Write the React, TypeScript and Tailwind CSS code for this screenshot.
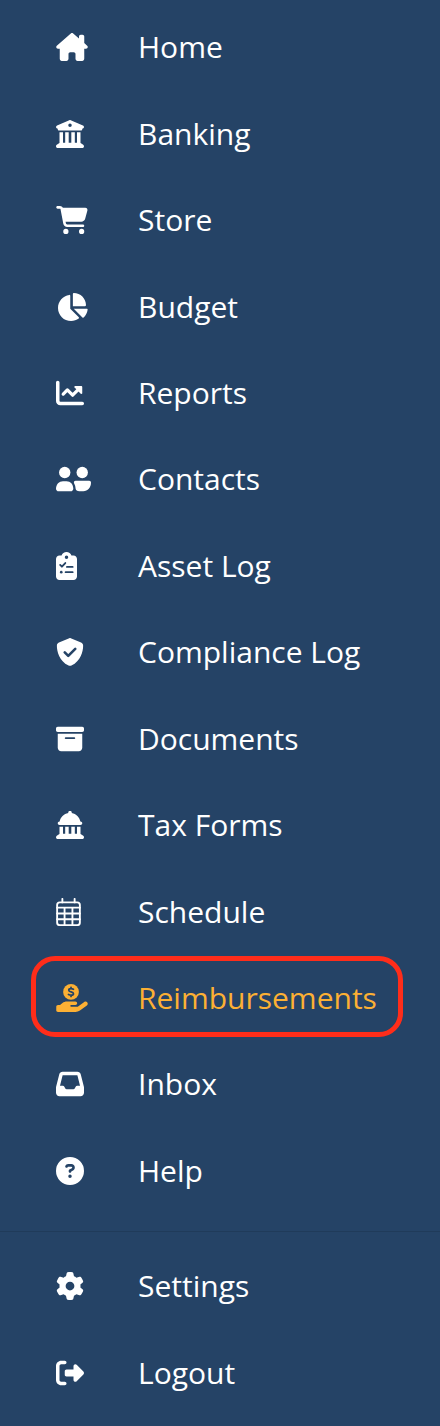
import type { ComponentType } from 'react'
import {
  FaBoxArchive,
  FaBuildingColumns,
  FaCartShopping,
  FaChartPie,
  FaCircleQuestion,
  FaGear,
  FaHouseChimney,
  FaInbox,
  FaLandmarkDome,
  FaRightFromBracket,
} from 'react-icons/fa6'

type IconType = ComponentType<{ className?: string }>

interface NavItem {
  label: string
  icon: IconType
  // icons are 28px tall, their width depends on the glyph
  iconSize?: string
  active?: boolean
}

const ChartLineUp: IconType = ({ className }) => (
  <svg viewBox="0 0 512 512" className={className} fill="currentColor">
    <path d="M64 64c0-17.7-14.3-32-32-32S0 46.3 0 64V400c0 44.2 35.8 80 80 80H480c17.7 0 32-14.3 32-32s-14.3-32-32-32H80c-8.8 0-16-7.2-16-16V64z" />
    <path d="M132 276l76-76 96 96 120-120" fill="none" stroke="currentColor" strokeWidth="60" strokeLinecap="round" strokeLinejoin="round" />
    <path d="M352 128H460c11 0 20 9 20 20V256c0 16-18 22-28 12L340 156c-10-10-4-28 12-28z" />
  </svg>
)

const UserPair: IconType = ({ className }) => (
  <svg viewBox="0 0 640 512" className={className} fill="currentColor">
    <circle cx="160" cy="136" r="104" />
    <circle cx="480" cy="136" r="104" />
    <path d="M0 432C0 354 56 296 128 296h64c72 0 124 58 124 136 0 27-21 48-48 48H48c-27 0-48-21-48-48z" />
    <path d="M358 288H608c18 0 32 14 32 32 0 96-60 160-140 160H428c-44 0-64-18-70-50-2-38-10-66-26-94-14-24 2-48 26-48z" />
  </svg>
)

const ClipboardCheck: IconType = ({ className }) => (
  <svg viewBox="0 0 384 512" className={className} fill="currentColor">
    <path
      fillRule="evenodd"
      d="M192 0c-41.8 0-77.4 26.7-90.5 64H64C28.7 64 0 92.7 0 128V448c0 35.3 28.7 64 64 64H320c35.3 0 64-28.7 64-64V128c0-35.3-28.7-64-64-64H282.5C269.4 26.7 233.8 0 192 0zm0 64a32 32 0 1 1 0 64 32 32 0 1 1 0-64z"
    />
    <g className="stroke-[#254366]" fill="none" strokeWidth="34" strokeLinecap="round" strokeLinejoin="round">
      <path d="M76 236l32 32 62-66M200 272H304M176 368H304" />
      <path d="M96 368h.1" strokeWidth="48" />
    </g>
  </svg>
)

const ShieldCheck: IconType = ({ className }) => (
  <svg viewBox="0 0 512 512" className={className} fill="currentColor">
    <path d="M256 0c4.6 0 9.2 1 13.4 2.9L457.7 82.8c22 9.3 38.4 31 38.3 57.2-.5 99.2-41.3 280.7-213.6 363.2-16.7 8-36.1 8-52.8 0C57.3 420.7 16.5 239.2 16 140c-.1-26.2 16.3-47.9 38.3-57.2L242.7 2.9C246.8 1 251.4 0 256 0z" />
    <path d="M160 264l64 64 128-128" className="stroke-[#254366]" fill="none" strokeWidth="48" strokeLinecap="round" strokeLinejoin="round" />
  </svg>
)

const CalendarGrid: IconType = ({ className }) => (
  <svg viewBox="0 0 448 512" className={className} fill="none" stroke="currentColor" strokeWidth="34" strokeLinecap="round">
    <rect x="16" y="80" width="416" height="416" rx="48" />
    <path d="M112 16V80M336 16V80M16 176H432M16 284H432M16 388H432M152 176V496M296 176V496" />
  </svg>
)

const HandHoldingCoin: IconType = ({ className }) => (
  <svg viewBox="0 0 576 512" className={className} fill="currentColor">
    <path d="M559.7 392.2c17.8-13.1 21.6-38.1 8.5-55.9s-38.1-21.6-55.9-8.5L392.6 416H272c-8.8 0-16-7.2-16-16s7.2-16 16-16h78c17.7 0 32-14.3 32-32s-14.3-32-32-32H193.7c-29.1 0-57.3 9.9-80 28L68.8 384H32c-17.7 0-32 14.3-32 32v64c0 17.7 14.3 32 32 32H352.5c29 0 57.3-9.3 80.7-26.5l126.5-93.3z" />
    <circle cx="270" cy="144" r="144" />
    <path
      d="M314 98c-14-8-29-13-43-13-26 0-42 11-42 28 0 42 86 20 86 64 0 19-18 28-43 28-17 0-34-6-48-13M270 62V84M270 206V228"
      className="stroke-[#254366]"
      fill="none"
      strokeWidth="32"
      strokeLinecap="round"
    />
  </svg>
)

const mainItems: NavItem[] = [
  { label: 'Home', icon: FaHouseChimney, iconSize: 'h-7 w-8' },
  { label: 'Banking', icon: FaBuildingColumns },
  { label: 'Store', icon: FaCartShopping, iconSize: 'h-7 w-8' },
  { label: 'Budget', icon: FaChartPie, iconSize: 'h-7 w-8' },
  { label: 'Reports', icon: ChartLineUp },
  { label: 'Contacts', icon: UserPair, iconSize: 'h-7 w-[35px]' },
  { label: 'Asset Log', icon: ClipboardCheck, iconSize: 'h-7 w-[21px]' },
  { label: 'Compliance Log', icon: ShieldCheck },
  { label: 'Documents', icon: FaBoxArchive },
  { label: 'Tax Forms', icon: FaLandmarkDome },
  { label: 'Schedule', icon: CalendarGrid, iconSize: 'h-7 w-[25px]' },
  { label: 'Reimbursements', icon: HandHoldingCoin, iconSize: 'h-7 w-8', active: true },
  { label: 'Inbox', icon: FaInbox },
  { label: 'Help', icon: FaCircleQuestion },
]

const accountItems: NavItem[] = [
  { label: 'Settings', icon: FaGear },
  { label: 'Logout', icon: FaRightFromBracket },
]

const NavRow = ({ label, icon: Icon, iconSize = 'size-7', active }: NavItem) => (
  <li className="flex flex-1 items-center">
    <a
      href="#"
      aria-current={active ? 'page' : undefined}
      className={`flex h-[81px] flex-1 items-center rounded-3xl border-5 pt-1 pl-5 ${
        active ? 'border-[#ff2d1a] text-[#fcb034]' : 'border-transparent text-white'
      }`}
    >
      <span className="w-[82px] shrink-0">
        <Icon className={iconSize} />
      </span>
      <span className="whitespace-nowrap">{label}</span>
    </a>
  </li>
)

export default function App() {
  return (
    <nav className="flex min-h-screen flex-col bg-[#254366] pt-0.5 pb-3 font-['Open_Sans',sans-serif] text-[30px] leading-10">
      <ul className="mr-[37px] ml-[31px] flex grow-14 basis-0 flex-col">
        {mainItems.map((item) => (
          <NavRow key={item.label} {...item} />
        ))}
      </ul>
      <hr className="mt-[19px] mb-[9px] border-[#203b5a]" />
      <ul className="mr-[37px] ml-[31px] flex grow-2 basis-0 flex-col">
        {accountItems.map((item) => (
          <NavRow key={item.label} {...item} />
        ))}
      </ul>
    </nav>
  )
}
